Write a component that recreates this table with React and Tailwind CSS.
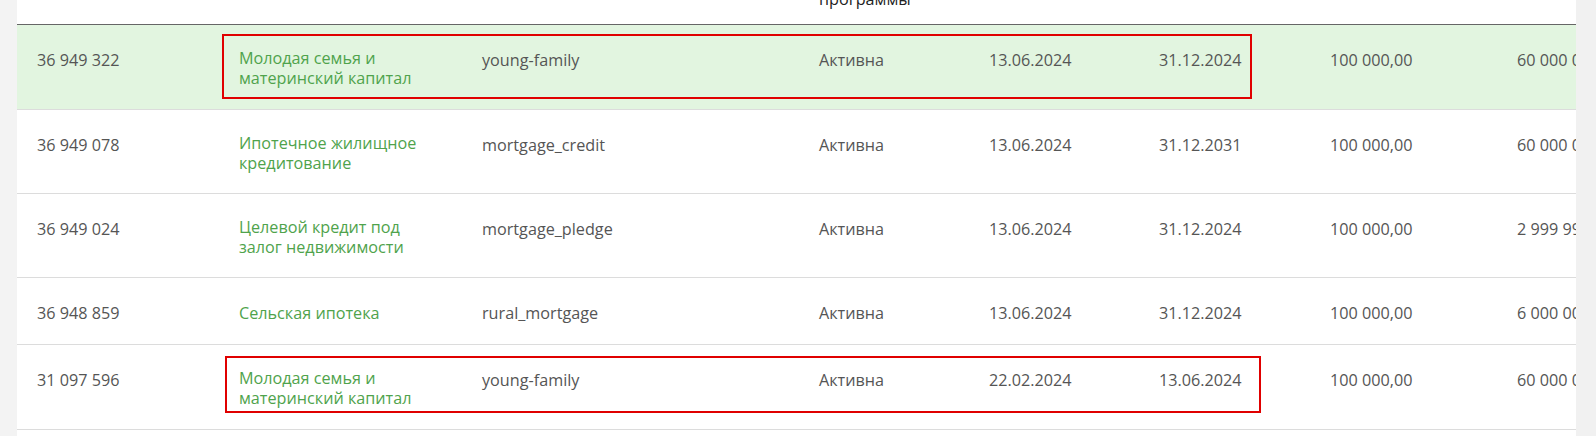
import React from 'react';

const cols = 'grid grid-cols-[202px_243px_337px_170px_170px_171px_187px_260px]';

const rows = [
  { id: '36 949 322', name: ['Молодая семья и', 'материнский капитал'], code: 'young-family', start: '13.06.2024', end: '31.12.2024', min: '100 000,00', max: '60 000 000,00', h: 'h-[85px]', active: true },
  { id: '36 949 078', name: ['Ипотечное жилищное', 'кредитование'], code: 'mortgage_credit', start: '13.06.2024', end: '31.12.2031', min: '100 000,00', max: '60 000 000,00', h: 'h-[84px]' },
  { id: '36 949 024', name: ['Целевой кредит под', 'залог недвижимости'], code: 'mortgage_pledge', start: '13.06.2024', end: '31.12.2024', min: '100 000,00', max: '2 999 999,00', h: 'h-[84px]' },
  { id: '36 948 859', name: ['Сельская ипотека'], code: 'rural_mortgage', start: '13.06.2024', end: '31.12.2024', min: '100 000,00', max: '6 000 000,00', h: 'h-[67px]' },
  { id: '31 097 596', name: ['Молодая семья и', 'материнский капитал'], code: 'young-family', start: '22.02.2024', end: '13.06.2024', min: '100 000,00', max: '60 000 000,00', h: 'h-[85px]' },
];

export default function App() {
  return (
    <div className="relative flex h-[436px] w-[1596px] overflow-hidden bg-white font-['Open_Sans',sans-serif] text-[16.2px] leading-[20px] text-[#555]">
      {/* left page strip */}
      <div className="w-[17px] shrink-0 bg-[#f3f3f3]"></div>

      {/* table */}
      <div className="w-[1559px] shrink-0 overflow-hidden">
        <div className={`${cols} h-[25px] border-b border-[#666] text-[#222] overflow-hidden`}>
          <div></div>
          <div></div>
          <div></div>
          <div className="flex h-[24px] flex-col justify-end pb-[15px] pl-5">
            <span>Статус</span>
            <span>программы</span>
          </div>
        </div>

        {rows.map((r, idx) => (
          <div key={idx} className={`${cols} ${r.h} border-b border-[#dcdcdc] ${r.active ? 'bg-[#e2f5e0]' : 'bg-white'}`}>
            <div className="pl-5 pt-[25px] whitespace-nowrap">{r.id}</div>
            <div className={`pl-5 ${r.name.length > 1 ? 'pt-[23px]' : 'pt-[25px]'} text-[#4fa34c]`}>
              {r.name.map((line, i) => (
                <div key={i} className="whitespace-nowrap">{line}</div>
              ))}
            </div>
            <div className="pl-5 pt-[25px] whitespace-nowrap">{r.code}</div>
            <div className="pl-5 pt-[25px]">Активна</div>
            <div className="pl-5 pt-[25px]">{r.start}</div>
            <div className="pl-5 pt-[25px]">{r.end}</div>
            <div className="pl-5 pt-[25px] whitespace-nowrap">{r.min}</div>
            <div className="pl-5 pt-[25px] whitespace-nowrap">{r.max}</div>
          </div>
        ))}
      </div>

      {/* scrollbar */}
      <div className="w-[20px] shrink-0 bg-[#f1f1f1]"></div>

      {/* annotation boxes */}
      <div className="absolute left-[222px] top-[34px] h-[65px] w-[1030px] border-2 border-[#e00000]"></div>
      <div className="absolute left-[225px] top-[356px] h-[57px] w-[1036px] border-2 border-[#e00000]"></div>
    </div>
  );
}
